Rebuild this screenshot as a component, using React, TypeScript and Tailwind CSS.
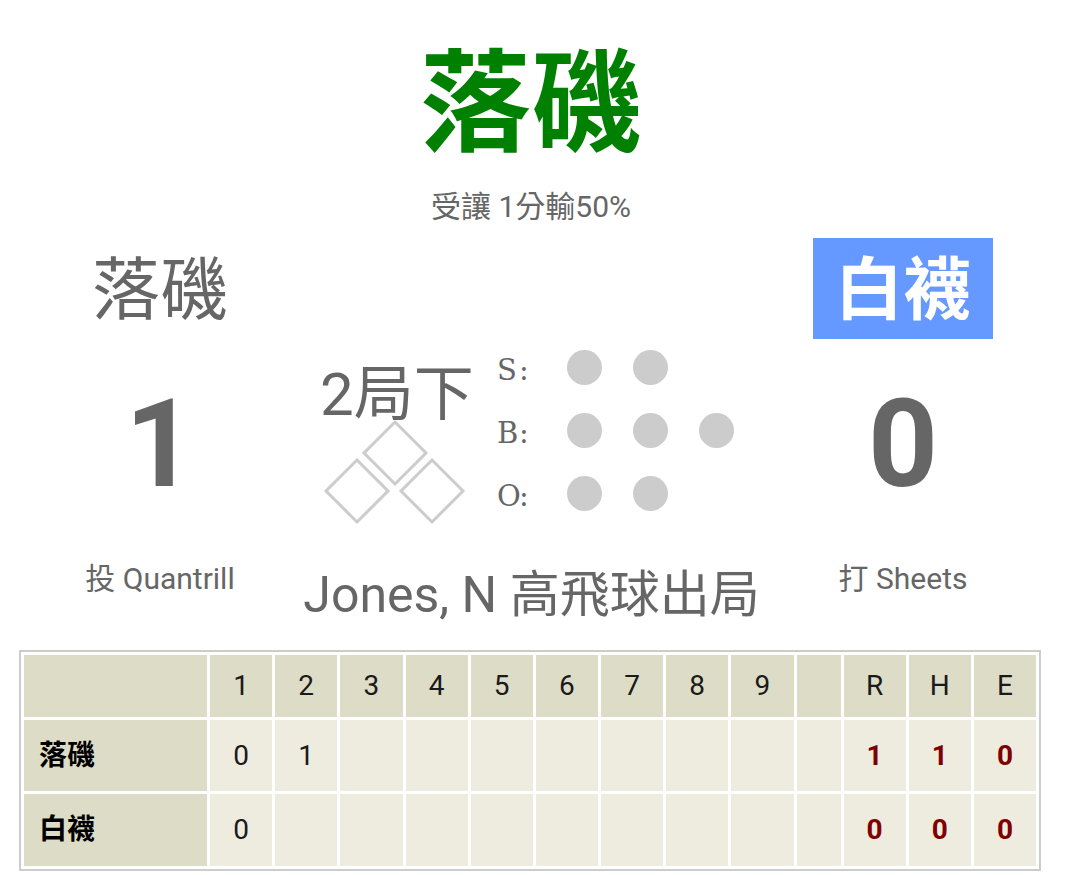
import React from "react";

const Dot = () => <div className="w-[35px] h-[35px] rounded-full bg-[#cccccc]" />;

export default function App() {
  const header = ["", "1", "2", "3", "4", "5", "6", "7", "8", "9", "", "R", "H", "E"];
  const rows: { name: string; inn: string[]; rhe: string[] }[] = [
    { name: "落磯", inn: ["0", "1", "", "", "", "", "", "", ""], rhe: ["1", "1", "0"] },
    { name: "白襪", inn: ["0", "", "", "", "", "", "", "", ""], rhe: ["0", "0", "0"] },
  ];
  return (
    <div className="w-[1078px] h-[875px] bg-white overflow-hidden font-[Roboto,'Noto_Sans_CJK_TC',sans-serif] text-[#666666]">
      <div className="w-[1062px] flex flex-col items-center pt-[50px]">
        <div className="text-[111px] leading-none font-bold text-[#008000]">落磯</div>
        <div className="mt-[23px] text-[30px] leading-[45px]">受讓 1分輸50%</div>
      </div>

      {/* row 1: team names */}
      <div className="flex mt-[9px] h-[102px]">
        <div className="ml-[70px] w-[180px] flex items-center justify-center pt-[4px] text-[68px] leading-none">落磯</div>
        <div className="w-[563px]" />
        <div className="w-[180px] h-[101px] bg-[#6699ff] flex items-center justify-center pt-[4px] text-[68px] leading-none font-bold text-white">白襪</div>
      </div>

      {/* row 2: scores + situation */}
      <div className="flex h-[200px]">
        <div className="ml-[70px] w-[180px] flex justify-center pt-[44px] text-[122px] leading-none font-bold">1</div>
        <div className="w-[563px] pl-[70px] flex mt-[-4px]">
          <div className="w-[150px] flex flex-col pt-[29px]">
            <div className="text-[60px] leading-none whitespace-nowrap">2局下</div>
            <svg width="150" height="112" viewBox="0 0 150 112" className="mt-[-9px]" fill="none" stroke="#cccccc" strokeWidth="3">
              <polygon points="75,6 106,37 75,68 44,37" />
              <polygon points="37,44 68,75 37,106 6,75" />
              <polygon points="112,44 143,75 112,106 81,75" />
            </svg>
          </div>
          <div className="ml-[27px] flex flex-col">
            {[
              ["S", 2],
              ["B", 3],
              ["O", 2],
            ].map(([l, n]) => (
              <div key={l as string} className="h-[63px] flex items-center">
                <div className="w-[36px] flex font-['DejaVu_Serif',serif] text-[29px] leading-none pt-[6px]">
                  <span className="w-[18px] text-center">{l}</span>
                  <span className="w-[18px] text-center">:</span>
                </div>
                <div className="ml-[34px] flex gap-[31px]">
                  {Array.from({ length: n as number }).map((_, i) => (
                    <Dot key={i} />
                  ))}
                </div>
              </div>
            ))}
          </div>
        </div>
        <div className="w-[180px] flex justify-center pt-[44px] text-[122px] leading-none font-bold">0</div>
      </div>

      {/* row 3: pitcher / play / batter */}
      <div className="flex h-[110px]">
        <div className="ml-[70px] w-[180px] flex justify-center pt-[24px] text-[30px] leading-none whitespace-nowrap">投 Quantrill</div>
        <div className="w-[563px] flex justify-center pt-[30px] text-[50px] leading-none whitespace-nowrap">Jones, N 高飛球出局</div>
        <div className="w-[180px] flex justify-center pt-[24px] text-[30px] leading-none whitespace-nowrap">打 Sheets</div>
      </div>

      {/* line score */}
      <div className="ml-[19px] w-[1022px] border-2 border-[#cccccc] p-[3px] grid grid-cols-[183px_repeat(9,minmax(0,1fr))_44px_repeat(3,minmax(0,1fr))] grid-rows-[62px_71px_72px] gap-[3px] text-[28px] text-[#1a1a1a]">
        {header.map((h, i) => (
          <div key={"h" + i} className="bg-[#dddcc6] flex items-center justify-center">
            {h}
          </div>
        ))}
        {rows.map((r) => (
          <React.Fragment key={r.name}>
            <div className="bg-[#dddcc6] flex items-center pl-[15px] font-bold text-black">{r.name}</div>
            {r.inn.map((v, i) => (
              <div key={i} className="bg-[#edecdf] flex items-center justify-center">
                {v}
              </div>
            ))}
            <div className="bg-[#edecdf]" />
            {r.rhe.map((v, i) => (
              <div key={"r" + i} className="bg-[#edecdf] flex items-center justify-center font-bold text-[#800000]">
                {v}
              </div>
            ))}
          </React.Fragment>
        ))}
      </div>
    </div>
  );
}
